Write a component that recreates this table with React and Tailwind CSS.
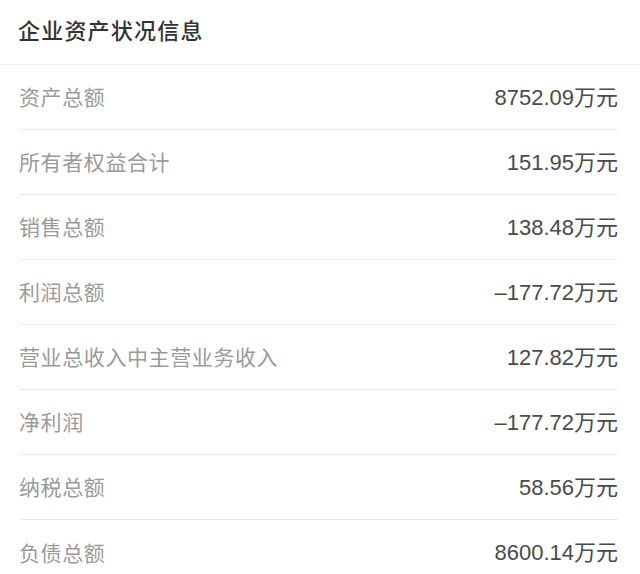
import React from 'react'

const rows = [
  { label: '资产总额', value: '8752.09万元' },
  { label: '所有者权益合计', value: '151.95万元' },
  { label: '销售总额', value: '138.48万元' },
  { label: '利润总额', value: '–177.72万元' },
  { label: '营业总收入中主营业务收入', value: '127.82万元' },
  { label: '净利润', value: '–177.72万元' },
  { label: '纳税总额', value: '58.56万元' },
  { label: '负债总额', value: '8600.14万元' },
]

const App = () => {
  return (
    <div className="w-[640px] h-[574px] overflow-hidden bg-white font-['Noto_Sans_CJK_SC','Liberation_Sans',sans-serif]">
      {/* Header */}
      <div className="h-[65px] flex items-center px-[18px] pb-[5px] border-b border-[#f0f0f0]">
        <h1 className="text-[22px] font-medium text-[#333] tracking-[1.2px]">企业资产状况信息</h1>
      </div>

      {/* Rows */}
      <div className="ml-[19px] mr-[22px]">
        {rows.map((row, index) => (
          <div
            key={index}
            className={`h-[65px] flex items-center justify-between ${
              index < rows.length - 1 ? 'border-b border-[#ececec]' : ''
            }`}
          >
            <span className="text-[21px] text-[#9a9a9a] tracking-[0.6px]">{row.label}</span>
            <span className="text-[22px] text-[#4a4a4a] font-['Liberation_Sans','Noto_Sans_CJK_SC',sans-serif]">
              {row.value}
            </span>
          </div>
        ))}
      </div>
    </div>
  )
}

export default App
